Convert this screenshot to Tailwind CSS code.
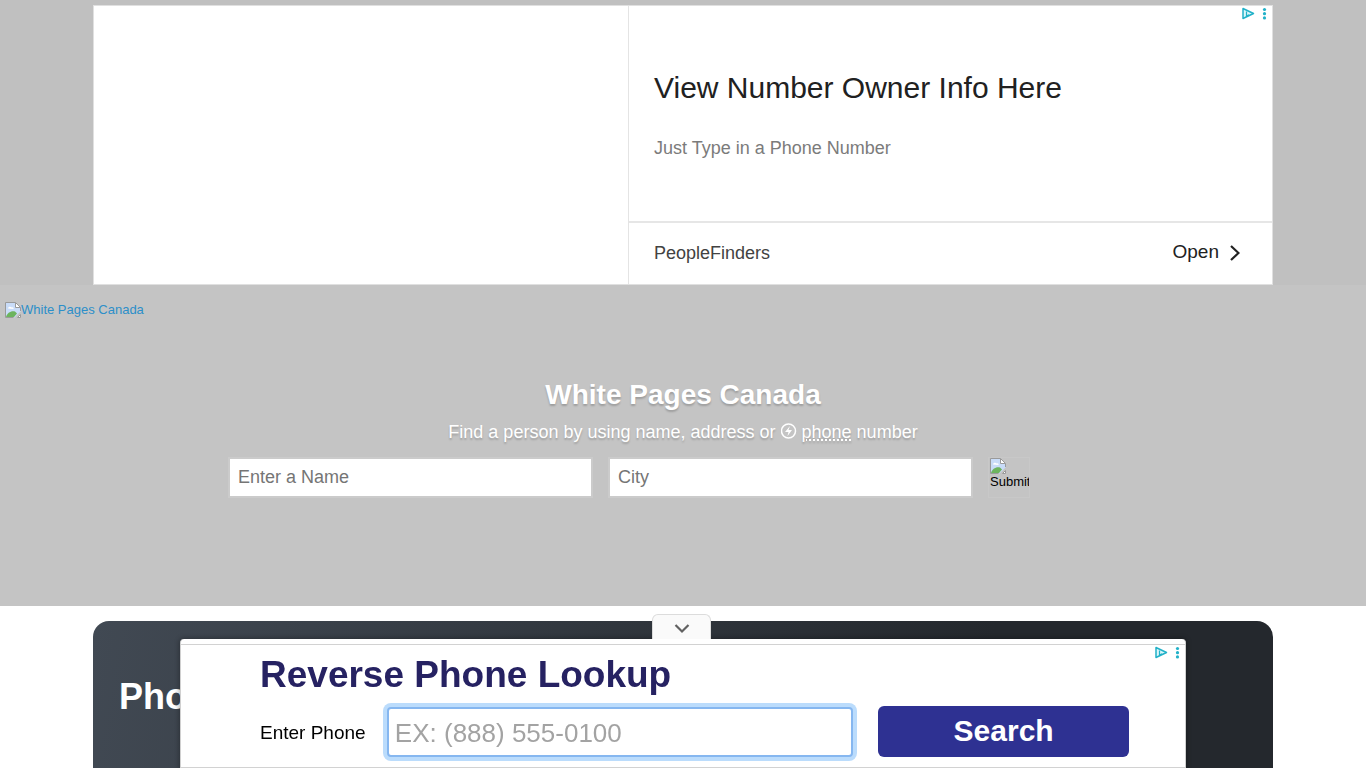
<!DOCTYPE html>
<html lang="en">
<head>
    <meta charset="UTF-8">
    <meta name="viewport" content="width=device-width, initial-scale=1.0">
    <title>White Pages Canada</title>
    <script src="https://cdn.jsdelivr.net/npm/@tailwindcss/browser@4"></script>
</head>
<body class="h-screen overflow-hidden flex flex-col bg-white font-['Liberation_Sans',Arial,sans-serif]">
    <svg class="hidden" aria-hidden="true">
        <symbol id="adchoices" viewBox="0 0 28 14">
            <path d="M2 2.500 V12.500 L12.500 7.500 Z" fill="#d9f6fa" stroke="#21b1c8" stroke-width="1.500" stroke-linejoin="round"/>
            <path d="M5.500 5.500v4.500l2.500-1.200" fill="none" stroke="#21b1c8" stroke-width="1.200"/>
            <g fill="#21b1c8"><circle cx="23.500" cy="3.500" r="1.600"/><circle cx="23.500" cy="7.700" r="1.600"/><circle cx="23.500" cy="11.900" r="1.600"/></g>
        </symbol>
        <symbol id="broken" viewBox="0 0 16 16">
            <path d="M.5 .5h10l5 5v4l-6 6h-9z" fill="#c9dcf8"/>
            <path d="M3 6.500c0-2 3-2.500 3.500-1 1.500-.5 2.500.5 2 1.500z" fill="#fff"/>
            <path d="M1 15c1-4 5-6.500 9-5.500l2 2L9 15z" fill="#6db45e"/>
            <path d="M10.500 .5v5h5" fill="#fff" stroke="#9a9a9a"/>
            <path d="M15.500 9V5.500l-5-5H.5v15h8" fill="none" stroke="#9a9a9a"/>
            <path d="M15.500 12.500v3h-3z" fill="#fff" stroke="#9a9a9a"/>
        </symbol>
    </svg>

    <!-- top ad -->
    <div class="shrink-0 bg-[#c0c0c0] pt-[5px]">
        <div class="relative mx-auto flex h-[280px] max-w-[1180px] border border-[#e0e0e0] bg-white">
            <div class="w-[535px] shrink-0 border-r border-[#e4e4e4]"></div>
            <div class="flex flex-1 flex-col">
                <div class="flex-1 border-b-2 border-[#e6e6e6] px-[25px] pt-16">
                    <h2 class="text-[30px] leading-9 text-[#212121]">View Number Owner Info Here</h2>
                    <p class="mt-[30px] text-lg leading-6 text-[#7b7b7b]">Just Type in a Phone Number</p>
                </div>
                <div class="flex h-[61px] items-center justify-between pr-8 pb-0.5 pl-[25px]">
                    <span class="text-lg text-[#424242]">PeopleFinders</span>
                    <a href="#" class="flex items-center gap-[11px] text-[19px] text-[#212121]">Open
                        <svg class="h-4 w-2.5" viewBox="0 0 10 16" fill="none" stroke="#212121" stroke-width="2.200"><path d="M1 1l7.500 7L1 15"/></svg>
                    </a>
                </div>
            </div>
            <svg class="absolute top-0 right-[3px] h-3.5 w-7"><use href="#adchoices"/></svg>
        </div>
    </div>

    <header class="h-[321px] shrink-0 bg-[#c4c4c4] pt-4">
        <a href="#" class="ml-[5px] flex h-[18px] items-center text-[13px] text-[#2c8fc9]">
            <svg class="h-4 w-4"><use href="#broken"/></svg>White Pages Canada
        </a>
        <div class="mx-auto mt-[58px] max-w-[910px] text-center text-white">
            <h1 class="text-[28px] leading-9 font-bold text-shadow-[0_2px_2px_rgb(0_0_0/0.2)]">White Pages Canada</h1>
            <p class="mt-[7px] text-lg leading-6 text-shadow-[0_2px_2px_rgb(0_0_0/0.2)]">Find a person by using name, address or
                <svg class="inline h-4 w-4 align-[-1px]" viewBox="0 0 16 16" fill="none" stroke="#fff" stroke-width="1.500"><circle cx="7.500" cy="8" r="7"/><path d="M9 3L4 9h3.500L6.500 13l4.500-6H7.500z" fill="#fff" stroke="none"/></svg>
                <a href="#" class="underline decoration-dotted decoration-2 underline-offset-1">phone</a> number</p>
            <form class="mt-[13px] flex gap-[15px]">
                <input type="text" aria-label="Name" placeholder="Enter a Name" class="h-[41px] w-[365px] border-2 border-[#cbcbcb] bg-white px-2 text-lg text-black placeholder:text-[#757575]">
                <input type="text" aria-label="City" placeholder="City" class="h-[41px] w-[365px] border-2 border-[#cbcbcb] bg-white px-2 text-lg text-black placeholder:text-[#757575]">
                <button type="submit" class="flex h-[41px] w-[42px] flex-col overflow-hidden border border-[#c8c8c8] pl-px text-left text-[13px] leading-4 text-black">
                    <svg class="h-4 w-4 shrink-0"><use href="#broken"/></svg>Submit
                </button>
            </form>
        </div>
    </header>

    <main class="flex flex-1 px-4 pt-[15px]">
        <section class="mx-auto w-full max-w-[1180px] rounded-t-2xl bg-linear-[100deg,#414953,#24282d_75%] px-[26px] pt-[52px]">
            <h2 class="text-4xl leading-[48px] font-bold text-white">Phone</h2>
        </section>
    </main>

    <!-- sticky bottom ad -->
    <aside class="fixed bottom-0 left-1/2 w-full max-w-[1006px] -translate-x-1/2">
        <button type="button" aria-label="Hide ad" class="absolute -top-[25px] left-[472px] flex h-[25px] w-[59px] items-center justify-center rounded-t-md border border-b-0 border-[#dcdcdc] bg-[#fafafa] pt-1">
            <svg class="h-3 w-4" viewBox="0 0 16 12" fill="none" stroke="#616161" stroke-width="2.200"><path d="M1.500 2L8 8.500 14.500 2"/></svg>
        </button>
        <div class="rounded-t border-x border-[#d0d0d0] bg-white pt-[5px] shadow-[0_0_5px_1px_rgb(0_0_0/0.3)]">
            <div class="relative border-y border-[#d2d2d2] pt-2 pr-14 pb-2.5 pl-[79px]">
                <h2 class="text-[37px] leading-[44px] font-bold text-[#262262]">Reverse Phone Lookup</h2>
                <form class="mt-[9px] flex items-center">
                    <label for="phone" class="w-[127px] pt-1 text-[19px] text-black">Enter Phone</label>
                    <input id="phone" type="tel" placeholder="EX: (888) 555-0100" class="h-[50px] w-[467px] rounded border-2 border-[#86b7f0] bg-white px-1.5 pt-1 text-[26px] text-black shadow-[0_0_0_4px_#bbdcfc] placeholder:text-[#a3a3a3]">
                    <button type="submit" class="ml-[25px] h-[51px] w-[251px] rounded-md bg-[#2e3192] pb-0.5 text-[30px] font-bold text-white">Search</button>
                </form>
                <svg class="absolute top-0 right-[3px] h-3.5 w-7"><use href="#adchoices"/></svg>
            </div>
        </div>
    </aside>
</body>
</html>
